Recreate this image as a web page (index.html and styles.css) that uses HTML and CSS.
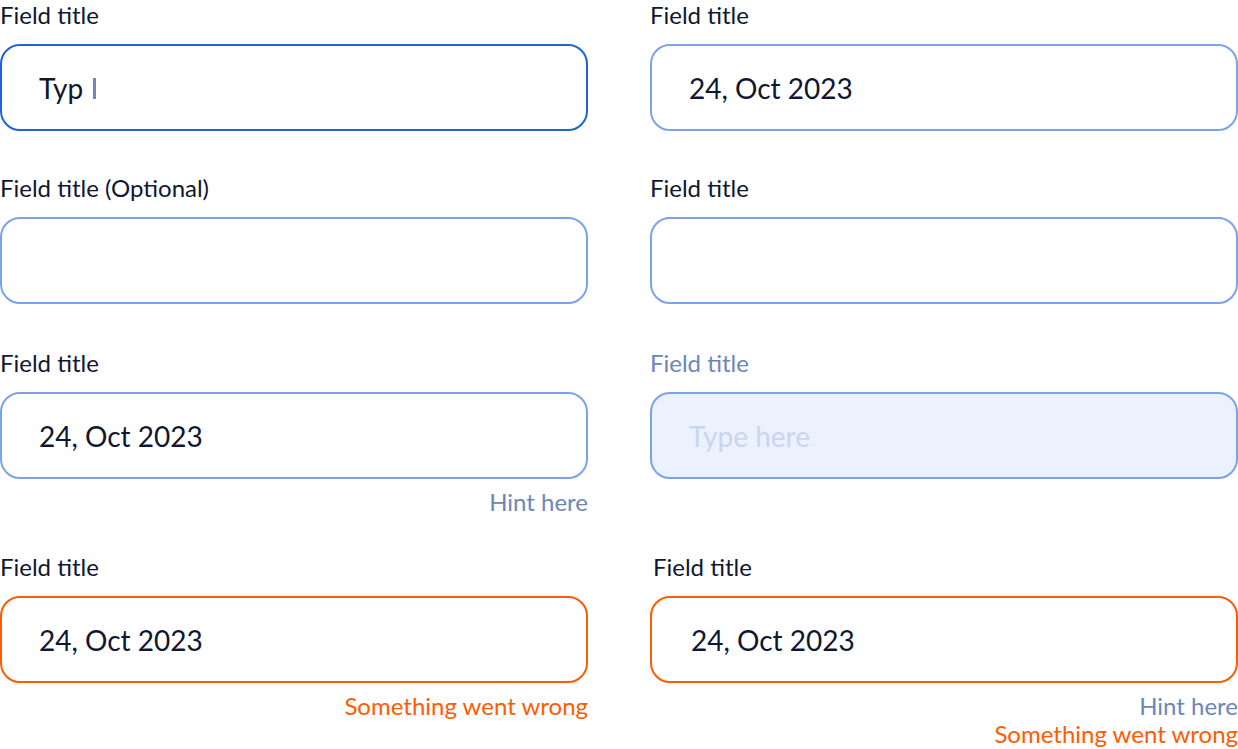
FILE: index.html
```html
<!DOCTYPE html>
<html lang="en">
<head>
<meta charset="utf-8">
<title>Text fields</title>
<link rel="stylesheet" href="styles.css">
</head>
<body>
<main class="page">
  <div class="row row-1">
    <div class="field">
      <div class="label">Field title</div>
      <div class="box box-focus"><span class="value">Typ</span><span class="caret"></span></div>
    </div>
    <div class="field">
      <div class="label">Field title</div>
      <div class="box"><span class="value">24, Oct 2023</span></div>
    </div>
  </div>
  <div class="row row-2">
    <div class="field">
      <div class="label">Field title (Optional)</div>
      <div class="box"></div>
    </div>
    <div class="field">
      <div class="label">Field title</div>
      <div class="box"></div>
    </div>
  </div>
  <div class="row row-3">
    <div class="field">
      <div class="label">Field title</div>
      <div class="box"><span class="value">24, Oct 2023</span></div>
      <div class="hint">Hint here</div>
    </div>
    <div class="field field-disabled">
      <div class="label">Field title</div>
      <div class="box box-disabled"><span class="placeholder">Type here</span></div>
    </div>
  </div>
  <div class="row row-4">
    <div class="field">
      <div class="label">Field title</div>
      <div class="box box-error"><span class="value">24, Oct 2023</span></div>
      <div class="hint error">Something went wrong</div>
    </div>
    <div class="field field-shift">
      <div class="label">Field title</div>
      <div class="box box-error"><span class="value">24, Oct 2023</span></div>
      <div class="hint">Hint here</div>
      <div class="hint hint-tight error">Something went wrong</div>
    </div>
  </div>
</main>
</body>
</html>
```

FILE: styles.css
```css
* { box-sizing: border-box; }

html, body {
  margin: 0;
  padding: 0;
  background: #ffffff;
}

body {
  font-family: Lato, "Noto Sans", sans-serif;
  color: #0f1731;
  width: 1238px;
  height: 749px;
  overflow: hidden;
}

.page {
  display: flex;
  flex-direction: column;
}

.row {
  display: grid;
  grid-template-columns: 588px 588px;
  column-gap: 62px;
  align-items: start;
}

.row-1 { margin-bottom: 42px; }
.row-2 { margin-bottom: 44px; }
.row-3 { margin-bottom: 36px; }

.field {
  display: flex;
  flex-direction: column;
}

.label {
  font-size: 24px;
  line-height: 29px;
  margin-bottom: 15px;
  color: #0f1731;
  white-space: nowrap;
}

.box {
  height: 87px;
  border: 2px solid #7ca3e8;
  border-radius: 20px;
  padding: 0 36px 0 37px;
  display: flex;
  align-items: center;
  background: #ffffff;
}

.value {
  font-size: 28px;
  line-height: 34px;
  color: #0f1731;
  white-space: nowrap;
}

.box-focus {
  border-color: #1f63d7;
}

.caret {
  display: inline-block;
  width: 3px;
  height: 21px;
  margin-left: 10px;
  margin-top: 1px;
  background: #7088bb;
}

.box-disabled {
  background: #ebf1fd;
}

.placeholder {
  font-size: 28px;
  line-height: 34px;
  color: #c9d6ef;
  white-space: nowrap;
}

.field-disabled .label {
  color: #6d86b8;
}

.box-error {
  border-color: #ff5b00;
}

.hint {
  margin-top: 9px;
  font-size: 24px;
  line-height: 28px;
  text-align: right;
  color: #6d86b8;
  white-space: nowrap;
}

.hint-tight { margin-top: 0; }

.error { color: #ff5b00; }

.field-shift .label { padding-left: 3px; }
.field-shift .box { padding-left: 39px; }
```
